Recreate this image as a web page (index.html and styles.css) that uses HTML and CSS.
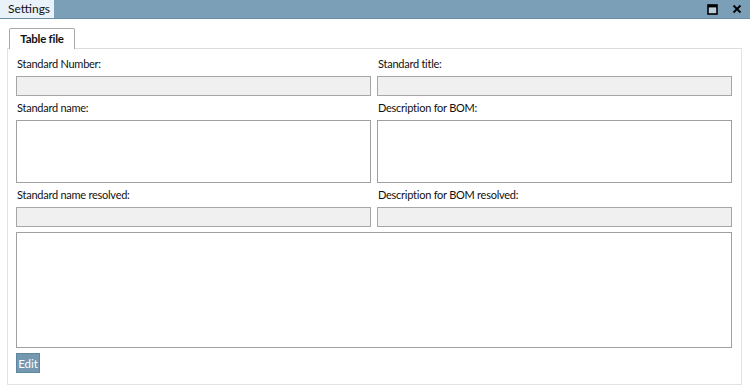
FILE: index.html
```html
<!DOCTYPE html>
<html lang="en">
<head>
    <meta charset="UTF-8">
    <meta name="viewport" content="width=device-width, initial-scale=1.0">
    <title>Settings</title>
    <link rel="stylesheet" href="styles.css">
</head>
<body>
    <div class="titlebar">
        <div class="title-tab">Settings</div>
        <div class="title-buttons">
            <svg width="11" height="11" viewBox="0 0 11 11">
                <rect x="1" y="1" width="9" height="9" fill="#b9cedb" stroke="#000" stroke-width="1.6"/>
                <rect x="1" y="1" width="9" height="2.4" fill="#000"/>
            </svg>
            <svg width="10" height="10" viewBox="0 0 10 10">
                <path d="M1.5 1.5 L8.5 8.5 M8.5 1.5 L1.5 8.5" stroke="#000" stroke-width="1.8"/>
            </svg>
        </div>
    </div>

    <div class="main">
        <div class="tabs">
            <div class="tab">Table file</div>
        </div>
        <div class="panel">
            <div class="grid">
                <label class="lbl">Standard Number:</label>
                <label class="lbl">Standard title:</label>
                <input class="field" type="text" disabled>
                <input class="field" type="text" disabled>

                <label class="lbl">Standard name:</label>
                <label class="lbl">Description for BOM:</label>
                <textarea class="area"></textarea>
                <textarea class="area"></textarea>

                <label class="lbl">Standard name resolved:</label>
                <label class="lbl">Description for BOM resolved:</label>
                <input class="field" type="text" disabled>
                <input class="field" type="text" disabled>
            </div>
            <textarea class="big-area"></textarea>
            <button class="btn" type="button">Edit</button>
        </div>
    </div>
</body>
</html>
```

FILE: styles.css
```css
body{
    margin: 0;
    font-family: Lato, "Noto Sans", sans-serif;
    font-size: 11px;
    letter-spacing: -0.25px;
    color: #111;
    background-color: #fff;
}

.titlebar{
    display: flex;
    justify-content: space-between;
    align-items: center;
    height: 18px;
    background-color: #7b9fb6;
    border-bottom: 1px solid #6a8ea6;
}

.title-tab{
    height: 18px;
    line-height: 18px;
    padding: 0 6px 0 8px;
    width: 40px;
    background-color: #e9f2f9;
    font-size: 12px;
    letter-spacing: 0;
    color: #111;
}

.title-buttons{
    display: flex;
    align-items: center;
    gap: 14px;
    padding-right: 8px;
}

.main{
    padding: 9px 8px 0 7px;
}

.tabs{
    display: flex;
    padding-left: 2px;
}

.tab{
    width: 64px;
    height: 20px;
    line-height: 20px;
    text-align: center;
    font-weight: bold;
    font-size: 11.5px;
    color: #111;
    border: 1px solid #a9a9a9;
    border-bottom: none;
    border-radius: 2px 2px 0 0;
    background-color: #fff;
    margin-bottom: -1px;
    position: relative;
}

.panel{
    border: 1px solid #e3e3e3;
    border-top-color: #dcdcdc;
    padding: 3px 9px 10px 8px;
    height: 322px;
}

.grid{
    display: grid;
    grid-template-columns: 1fr 1fr;
    column-gap: 6px;
}

.lbl{
    display: block;
    height: 24px;
    line-height: 24px;
    padding-left: 1px;
}

.field{
    box-sizing: border-box;
    width: 100%;
    height: 20px;
    margin: 0;
    border: 1px solid #a6a6a6;
    background-color: #f0f0f0;
}

.area{
    box-sizing: border-box;
    width: 100%;
    height: 63px;
    margin: 0;
    border: 1px solid #a0a0a0;
    background-color: #fff;
    resize: none;
    display: block;
}

.big-area{
    box-sizing: border-box;
    display: block;
    width: 100%;
    height: 116px;
    margin: 5px 0 0 0;
    border: 1px solid #a0a0a0;
    background-color: #fff;
    resize: none;
}

.btn{
    display: block;
    margin-top: 5px;
    width: 24px;
    height: 20px;
    padding: 0;
    border: 1px solid #5f86a0;
    background-color: #7398b0;
    color: #fff;
    font-family: Lato, "Noto Sans", sans-serif;
    font-size: 11.5px;
    letter-spacing: 0;
}
```
